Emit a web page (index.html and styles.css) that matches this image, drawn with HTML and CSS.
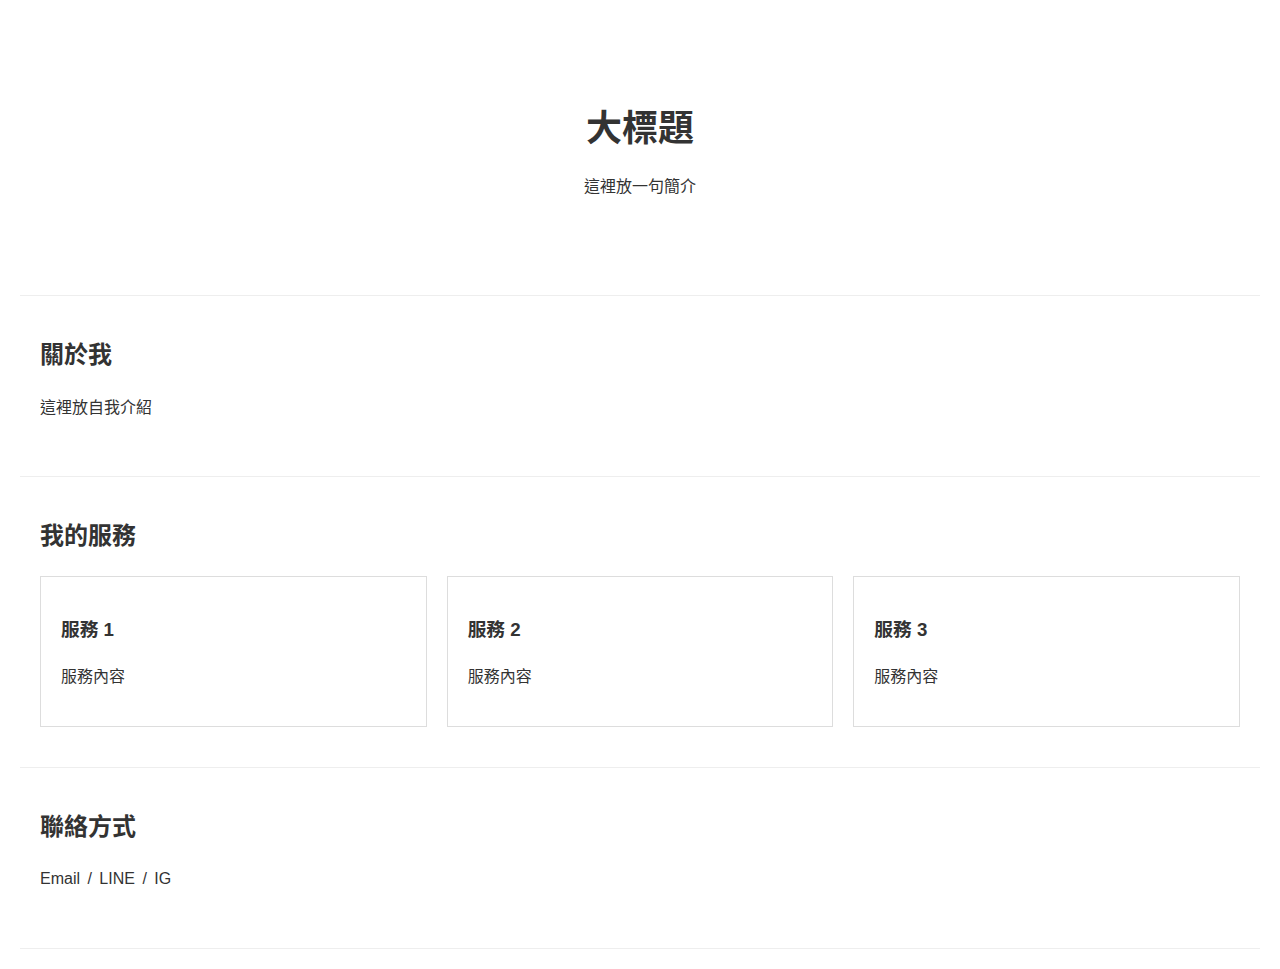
FILE: index.html
```html
<!DOCTYPE html>
<html lang="zh-Hant">
<head>
<meta charset="utf-8">
<title>大標題</title>
<link rel="stylesheet" href="styles.css">
</head>
<body>
  <header class="hero">
    <h1 class="hero-title">大標題</h1>
    <p class="hero-sub">這裡放一句簡介</p>
  </header>

  <section class="block">
    <h2 class="block-title">關於我</h2>
    <p class="block-text">這裡放自我介紹</p>
  </section>

  <section class="block">
    <h2 class="block-title">我的服務</h2>
    <div class="cards">
      <div class="card">
        <h3 class="card-title">服務 1</h3>
        <p class="card-text">服務內容</p>
      </div>
      <div class="card">
        <h3 class="card-title">服務 2</h3>
        <p class="card-text">服務內容</p>
      </div>
      <div class="card">
        <h3 class="card-title">服務 3</h3>
        <p class="card-text">服務內容</p>
      </div>
    </div>
  </section>

  <section class="block">
    <h2 class="block-title">聯絡方式</h2>
    <p class="block-text">Email<span class="sep"> / </span>LINE<span class="sep"> / </span>IG</p>
  </section>
</body>
</html>
```

FILE: styles.css
```css
html, body {
  background: #ffffff;
}

body {
  margin: 20px;
  font-family: "Liberation Sans", "Noto Sans CJK TC", sans-serif;
  font-size: 16px;
  line-height: 1.6;
  color: #333333;
}

.hero {
  padding: 80px 20px;
  text-align: center;
  border-bottom: 1px solid #eeeeee;
}

.hero-title {
  margin: 0;
  font-size: 36px;
  font-weight: bold;
}

.hero-sub {
  margin: 16px 0;
}

.block {
  padding: 40px 20px;
  border-bottom: 1px solid #eeeeee;
}

.block-title {
  margin: 0 0 20px;
  font-size: 24px;
  font-weight: bold;
}

.block-text {
  margin: 0 0 16px;
}

.sep {
  margin: 0 3px;
}

.cards {
  display: grid;
  grid-template-columns: repeat(3, 1fr);
  gap: 20px;
}

.card {
  border: 1px solid #dddddd;
  padding: 20px;
}

.card-title {
  margin: 18.72px 0;
  font-size: 18.72px;
  font-weight: bold;
}

.card-text {
  margin: 16px 0;
}
```
